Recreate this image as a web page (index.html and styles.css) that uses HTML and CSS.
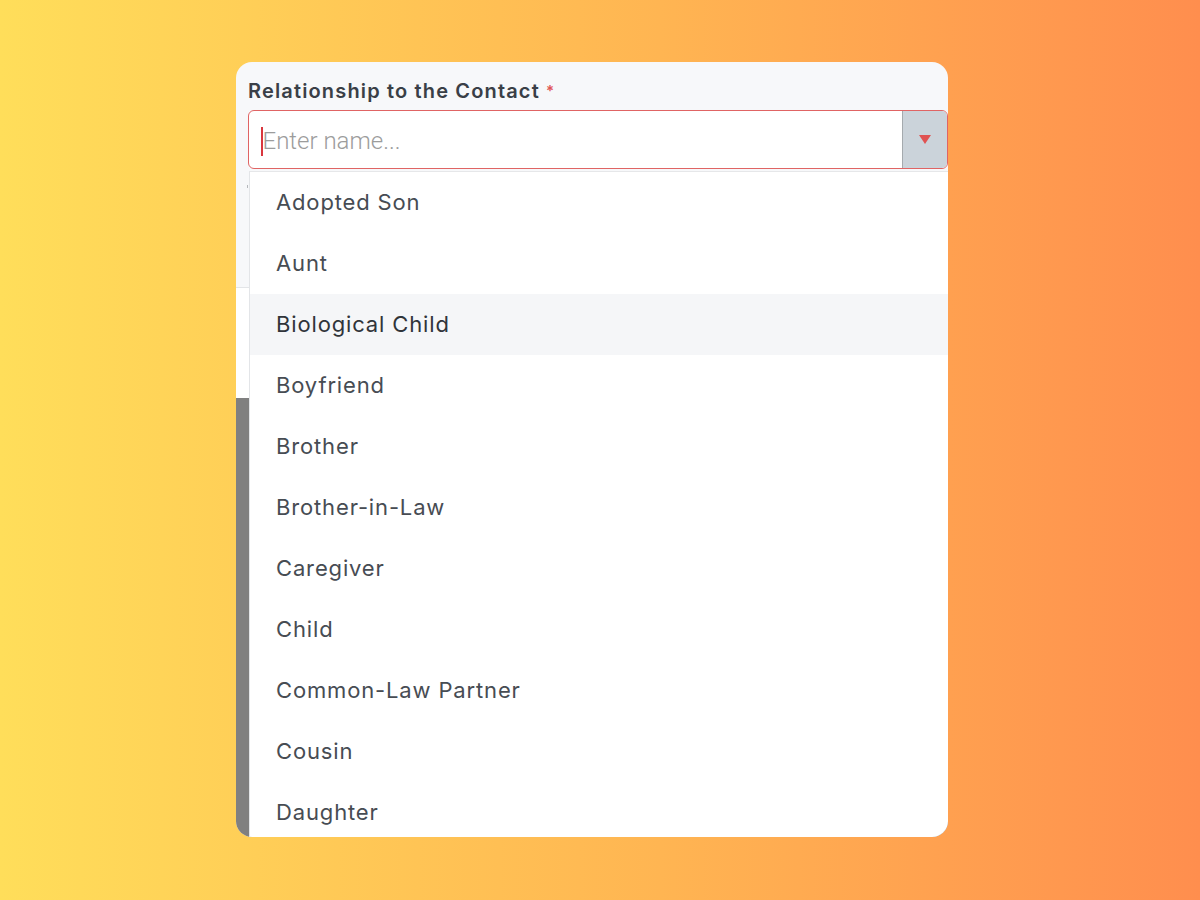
FILE: index.html
```html
<!DOCTYPE html>
<html lang="en">
<head>
  <meta charset="UTF-8">
  <title>Relationship to the Contact</title>
  <link rel="stylesheet" href="styles.css">
</head>
<body>
  <div class="card">
    <div class="field">
      <label class="field-label">Relationship to the Contact <span class="req">*</span></label>
      <div class="select">
        <div class="select-input">
          <span class="caret"></span>
          <span class="placeholder">Enter name...</span>
        </div>
        <div class="select-toggle">
          <svg width="12" height="9" viewBox="0 0 12 9"><path d="M0 0h12L6 9z" fill="#e05252"/></svg>
        </div>
      </div>
    </div>

    <div class="under">
      <div class="under-top"><span class="tick"></span></div>
      <div class="under-panel"></div>
      <div class="under-dark"></div>
    </div>

    <ul class="menu">
      <li>Adopted Son</li>
      <li>Aunt</li>
      <li class="hover">Biological Child</li>
      <li>Boyfriend</li>
      <li>Brother</li>
      <li>Brother-in-Law</li>
      <li>Caregiver</li>
      <li>Child</li>
      <li>Common-Law Partner</li>
      <li>Cousin</li>
      <li>Daughter</li>
    </ul>
  </div>
</body>
</html>
```

FILE: styles.css
```css
html, body {
  height: 100%;
}
body {
  margin: 0;
  padding: 62px 0 0 236px;
  box-sizing: border-box;
  background: linear-gradient(90deg, #ffde5a 0%, #ffb552 55%, #ff8e4e 100%);
  font-family: Inter, "Noto Sans", sans-serif;
}
.card {
  position: relative;
  width: 712px;
  height: 775px;
  border-radius: 16px;
  overflow: hidden;
  background-color: #f7f8fa;
  display: flex;
  flex-direction: column;
}
.field {
  padding: 15px 0 0 12px;
}
.field-label {
  display: block;
  font-size: 20px;
  font-weight: 600;
  color: #3a3f47;
  line-height: 28px;
  letter-spacing: 1.15px;
}
.req {
  color: #e05555;
  font-size: 15px;
  vertical-align: top;
}
.select {
  margin-top: 5px;
  height: 59px;
  display: flex;
  border: 1.5px solid #e06464;
  border-radius: 6px;
  background-color: white;
  box-sizing: border-box;
  overflow: hidden;
}
.select-input {
  flex: 1;
  display: flex;
  align-items: center;
  padding-left: 12px;
}
.caret {
  width: 1.5px;
  height: 29px;
  margin-top: 3px;
  background-color: #d9363e;
}
.placeholder {
  padding-top: 3px;
  font-family: Roboto, sans-serif;
  font-weight: 300;
  font-size: 24px;
  color: #9c9c9c;
}
.select-toggle {
  width: 44px;
  background-color: #cbd3da;
  border-left: 1px solid #a5aaae;
  display: flex;
  align-items: center;
  justify-content: center;
}
.under {
  flex: 1;
  display: flex;
  flex-direction: column;
  margin-top: 3px;
}
.under-top {
  height: 115px;
  border-bottom: 1px solid #e3e5e8;
  position: relative;
}
.tick {
  position: absolute;
  left: 11px;
  top: 13px;
  width: 1px;
  height: 3px;
  background-color: #b5b8bc;
}
.under-panel {
  height: 110px;
  background-color: white;
}
.under-dark {
  flex: 1;
  background-color: #808080;
}
.menu {
  position: absolute;
  left: 13px;
  right: 0;
  top: 109px;
  bottom: 0;
  margin: 0;
  padding: 0;
  list-style: none;
  background-color: white;
  border-left: 1px solid #e3e5e8;
  border-top: 1px solid #e6e7e9;
}
.menu li {
  height: 61px;
  box-sizing: border-box;
  padding: 0 0 2px 26px;
  display: flex;
  align-items: center;
  font-size: 22px;
  letter-spacing: 0.85px;
  color: #474c53;
}
.menu li.hover {
  background-color: #f5f6f8;
  color: #30343a;
}
```
